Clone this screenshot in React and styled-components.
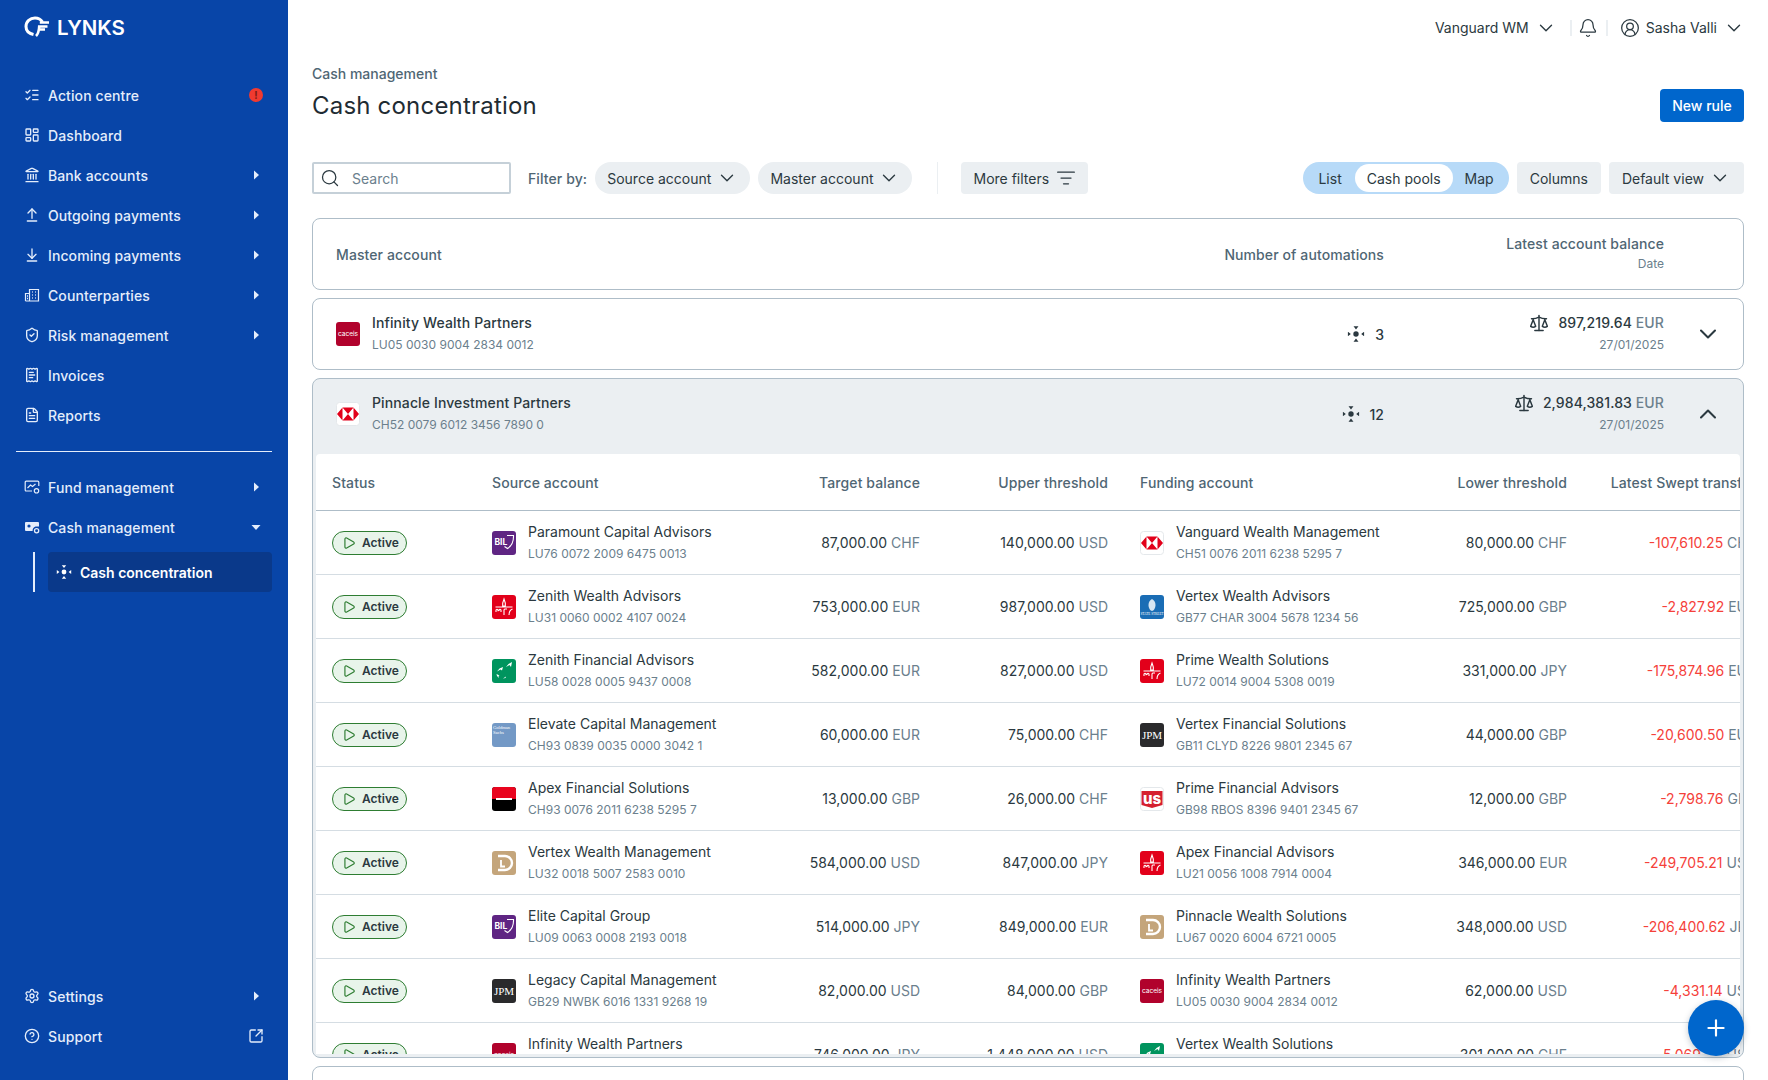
import React from "react";
import styled, { createGlobalStyle } from "styled-components";
import {
  ArrowDownToLine,
  ArrowUpFromLine,
  Bell,
  ChevronDown,
  ChevronUp,
  CircleHelp,
  CircleUserRound,
  FileText,
  LayoutDashboard,
  Landmark,
  ListChecks,
  ListFilter,
  Plus,
  ReceiptText,
  Scale,
  Search,
  Settings,
  ShieldCheck,
  SquareArrowOutUpRight,
  Play,
} from "lucide-react";

const GlobalStyle = createGlobalStyle`
  html, body { margin: 0; padding: 0; height: 100%; overflow: hidden; background: #fff; }
  body { font-family: Inter, "Liberation Sans", sans-serif; font-size: 14px; color: #2b3940; }
  * { box-sizing: border-box; }
`;

const Page = styled.div`
  display: flex;
  width: 100vw;
  height: 100vh;
  overflow: hidden;
`;

/* sidebar */
const Sidebar = styled.aside`
  width: 288px;
  flex: none;
  background: #0845a8;
  color: #e4edfb;
  display: flex;
  flex-direction: column;
  padding-bottom: 24px;
`;

const Brand = styled.div`
  height: 75px;
  padding: 16px 0 0 24px;
  display: flex;
  align-items: flex-start;
  gap: 7px;
  color: #fff;
`;

const BrandName = styled.span`
  font-size: 20.5px;
  line-height: 24px;
  font-weight: 600;
`;

const NavRow = styled.div`
  height: 40px;
  display: flex;
  align-items: center;
  padding: 0 24px;
  gap: 8px;
  font-weight: 500;
  letter-spacing: 0.1px;
  flex: none;
`;

const NavLabel = styled.span`
  flex: 1;
`;

const NavDivider = styled.div`
  height: 1px;
  background: #e4edfb;
  margin: 16px 16px 15px;
  flex: none;
`;

const SubNav = styled.div`
  margin: 5px 16px 0 33px;
  padding-left: 13px;
  border-left: 2px solid #e4edfb;
  flex: none;
`;

const SubItem = styled.div`
  height: 40px;
  display: flex;
  align-items: center;
  gap: 8px;
  padding-left: 8px;
  background: #0a398a;
  border-radius: 4px;
  color: #fff;
  font-weight: 600;
`;

const NavBottom = styled.div`
  margin-top: auto;
`;

const Alert = styled.span`
  width: 14px;
  height: 14px;
  margin-right: 1px;
  border-radius: 50%;
  background: #f03a30;
  color: #7d1a14;
  font-size: 10px;
  line-height: 14px;
  font-weight: 700;
  text-align: center;
`;

/* main column */
const Main = styled.main`
  flex: 1;
  min-width: 0;
  padding: 0 24px;
  height: 100vh;
  overflow: hidden;
`;

const TopBar = styled.div`
  height: 55px;
  display: flex;
  align-items: center;
  justify-content: flex-end;
  margin-right: -1px;
`;

const TopText = styled.span`
  color: #2b3940;
`;

const TopGroup = styled.div`
  display: flex;
  align-items: center;
  gap: ${(p) => p.$gap || 6}px;
`;

const TopDivider = styled.span`
  width: 2px;
  height: 16px;
  background: #ebeff2;
  margin: 0 ${(p) => p.$right}px 0 ${(p) => p.$left}px;
`;

const PageHead = styled.div`
  display: flex;
  justify-content: space-between;
  align-items: flex-end;
  padding-top: 9px;
  margin-bottom: 40px;
`;

const Crumb = styled.div`
  font-weight: 500;
  line-height: 20px;
  color: #4f6674;
  margin-bottom: 6px;
`;

const Title = styled.h1`
  margin: 0;
  font-size: 24px;
  line-height: 32px;
  font-weight: 400;
  letter-spacing: 0.2px;
  color: #1f2c33;
`;

const PrimaryButton = styled.button`
  height: 33px;
  width: 84px;
  border: 0;
  border-radius: 4px;
  background: #0066cc;
  color: #fff;
  font: 500 14px Inter, sans-serif;
`;

const Toolbar = styled.div`
  display: flex;
  align-items: center;
  height: 32px;
  margin-bottom: 24px;
`;

const SearchBox = styled.div`
  width: 199px;
  height: 32px;
  border: 2px solid #c5d0d8;
  border-radius: 2px;
  display: flex;
  align-items: center;
  gap: 12px;
  padding-left: 6px;
  color: #6b808d;
`;

const SearchGlyph = styled(Search)`
  color: #2b3940;
`;

const FilterLabel = styled.span`
  margin: 0 8px 0 17px;
  font-weight: 500;
  letter-spacing: 0.1px;
  color: #4f6674;
`;

const Chip = styled.div`
  height: 32px;
  display: flex;
  align-items: center;
  gap: ${(p) => p.$gap || 5}px;
  padding: 0 ${(p) => p.$pad || 12}px;
  margin-left: ${(p) => p.$left || 0}px;
  background: #ebeff2;
  border-radius: ${(p) => (p.$round ? "16px" : "4px")};
  color: #2b3940;
  white-space: nowrap;
`;

const ToolDivider = styled.span`
  width: 1px;
  height: 32px;
  background: #ebeff2;
  margin: 0 23px 0 25px;
`;

const RightTools = styled.div`
  margin-left: auto;
  display: flex;
  align-items: center;
  gap: 8px;
`;

const Segment = styled.div`
  height: 32px;
  display: flex;
  align-items: center;
  padding: 0 15px;
  border-radius: 16px;
  background: #b7daf8;
  color: #2b3940;
`;

const SegmentItem = styled.span`
  height: 28px;
  display: flex;
  align-items: center;
  border-radius: 14px;
  background: ${(p) => (p.$active ? "#fff" : "transparent")};
  padding: ${(p) => (p.$active ? "0 12px" : "0")};
  margin: ${(p) => (p.$active ? "0 12px 0 13px" : "0")};
`;

/* cards */
const Card = styled.section`
  border: 1px solid #aebdc8;
  border-radius: 8px;
  margin-bottom: 8px;
  overflow: hidden;
  background: ${(p) => (p.$open ? "#ebeff2" : "#fff")};
  ${(p) => p.$open && "height: 680px; padding: 0 3px 4px;"}
  ${(p) => p.$footer && "height: 72px;"}
`;

const MasterRow = styled.div`
  height: ${(p) => (p.$open ? 75 : 70)}px;
  display: flex;
  align-items: center;
  padding-left: ${(p) => (p.$open ? 20 : 23)}px;
  padding-bottom: ${(p) => (p.$open ? 5 : 0)}px;
`;

const MasterName = styled.div`
  flex: 1;
  min-width: 0;
  display: flex;
  align-items: center;
  gap: 12px;
`;

const HeadLabel = styled.div`
  font-weight: 500;
  letter-spacing: 0.1px;
  color: #4f6674;
`;

const AutoCell = styled.div`
  display: flex;
  align-items: center;
  justify-content: flex-end;
  gap: 10px;
  font-weight: 500;
`;

const BalanceCell = styled.div`
  width: 280px;
  text-align: right;
  flex: none;
`;

const BalanceTop = styled.div`
  display: flex;
  align-items: center;
  justify-content: flex-end;
  gap: 9px;
  line-height: 20px;
  font-weight: 500;
  letter-spacing: 0.1px;
`;

const DateText = styled.div`
  font-size: 12px;
  line-height: 20px;
  margin-top: 2px;
  color: #6b808d;
`;

const ToggleCell = styled.div`
  width: ${(p) => (p.$open ? 76 : 79)}px;
  flex: none;
  display: flex;
  justify-content: center;
  padding-left: ${(p) => (p.$open ? 12 : 8)}px;
  color: #2b3940;
`;

const AccountText = styled.div`
  min-width: 0;
`;

const AccountName = styled.div`
  line-height: 20px;
  white-space: nowrap;
  font-weight: ${(p) => (p.$strong ? 500 : 400)};
  letter-spacing: ${(p) => (p.$strong ? "0.12px" : "0")};
  color: #2b3940;
`;

const Iban = styled.div`
  font-size: 12px;
  line-height: 20px;
  margin-top: 2px;
  white-space: nowrap;
  color: #6b808d;
`;

const Currency = styled.span`
  color: #6b808d;
  font-weight: ${(p) => p.$weight || 400};
`;

/* inner table */
const TableWrap = styled.div`
  height: 600px;
  background: #fff;
  border-radius: 4px 4px 0 0;
  overflow: hidden;
`;

const columns = "160px 280px 180px 188px 280px 179px 189px";

const TableHead = styled.div`
  display: grid;
  grid-template-columns: ${columns};
  width: 1456px;
  height: 57px;
  align-items: center;
  border-bottom: 1px solid #aebdc8;
`;

const TableRow = styled.div`
  display: grid;
  grid-template-columns: ${columns};
  width: 1456px;
  height: 64px;
  align-items: center;
  border-bottom: 1px solid #d5dde3;
`;

const Th = styled.div`
  padding: 0 16px;
  font-weight: 500;
  letter-spacing: 0.1px;
  color: #4f6674;
  white-space: nowrap;
  text-align: ${(p) => (p.$right ? "right" : "left")};
`;

const Td = styled.div`
  padding: 0 16px;
  white-space: nowrap;
  text-align: right;
  color: ${(p) => (p.$negative ? "#f5413a" : "#2b3940")};
`;

const AccountCell = styled.div`
  padding: 0 16px;
  display: flex;
  align-items: center;
  gap: 12px;
`;

const StatusCell = styled.div`
  padding: 0 16px;
`;

const StatusPill = styled.span`
  width: 75px;
  height: 24px;
  display: flex;
  align-items: center;
  gap: 6px;
  padding-left: 9px;
  border: 1px solid #2e7d32;
  border-radius: 12px;
  background: #e8f4ea;
  font-size: 12px;
  font-weight: 600;
  color: #2b3940;
`;

const Fab = styled.button`
  position: fixed;
  left: 1688px;
  top: 1000px;
  width: 56px;
  height: 56px;
  border: 0;
  border-radius: 50%;
  background: #0066cc;
  color: #fff;
  display: flex;
  align-items: center;
  justify-content: center;
  box-shadow: 0 2px 6px rgba(20, 40, 60, 0.25);
`;

const Caret = ({ down }) => (
  <svg width="16" height="16" viewBox="0 0 16 16" fill="currentColor">
    {down ? <path d="M3.500 6h9L8 11z" /> : <path d="M6 3.500v9L11 8z" />}
  </svg>
);

const BrandMark = () => (
  <svg width="26" height="22" viewBox="0 0 26 22" fill="none" stroke="currentColor" strokeWidth="3">
    <path d="M9.500 18.500C5 17.500 2 14.600 2 10.500 2 5.600 6 2 11 2c3.600 0 6 1.600 7.500 4" />
    <path d="M12 20c2-2 3-5 3.200-9.500h8.300M15.800 6.500H25M15 13.500h6" strokeWidth="2.600" />
  </svg>
);

const FundIcon = () => (
  <svg width="16" height="16" viewBox="0 0 16 16" fill="none" stroke="currentColor" strokeWidth="1.200">
    <path d="M8 12H2.200a1 1 0 0 1-1-1V3.200a1 1 0 0 1 1-1h11.600a1 1 0 0 1 1 1V7" />
    <path d="M3.500 9l3-3 2 1.500L11.500 5" />
    <circle cx="12.500" cy="11.800" r="2.200" />
  </svg>
);

const CashIcon = () => (
  <svg width="16" height="16" viewBox="0 0 16 16" fill="currentColor">
    <path d="M1 4a1 1 0 0 1 1-1h12a1 1 0 0 1 1 1v3.500h-3.400a4.400 4.400 0 0 0-3 4.500H2a1 1 0 0 1-1-1z" />
    <circle cx="5" cy="7" r="1.600" fill="#0845a8" />
    <circle cx="12.600" cy="11.800" r="2.100" fill="none" stroke="currentColor" strokeWidth="1.300" />
  </svg>
);

const BuildingIcon = () => (
  <svg width="16" height="16" viewBox="0 0 16 16" fill="none" stroke="currentColor" strokeWidth="1.200">
    <path d="M1.500 14V6.500h4M5.500 14V2.500h9V14zM1.500 14h13" />
    <path d="M8 5h.8M11.200 5h.8M8 8h.8M11.200 8h.8M8 11h.8M11.200 11h.8M3 9h1M3 11.500h1" strokeWidth="1.400" />
  </svg>
);

const SweepIcon = ({ size = 18 }) => (
  <svg width={size} height={size} viewBox="0 0 16 16" fill="currentColor">
    <circle cx="8" cy="8" r="2.400" />
    <path d="M5.800 1.200h4.400L8 4zM5.800 14.800h4.400L8 12zM.8 6l2.600 2-2.600 2zM15.200 6l-2.600 2 2.600 2z" />
  </svg>
);

const Logo = ({ kind }) => {
  const box = { width: 24, height: 24, viewBox: "0 0 24 24", style: { flex: "none" } };
  switch (kind) {
    case "caceis":
      return (
        <svg {...box}>
          <rect width="24" height="24" rx="3" fill="#b1022c" />
          <text x="12" y="14" textAnchor="middle" fontSize="6.600" fill="#fff" fontFamily="Inter, sans-serif">caceis</text>
        </svg>
      );
    case "hsbc":
      return (
        <svg {...box}>
          <rect x=".5" y=".5" width="23" height="23" rx="3" fill="#fff" stroke="#e4e8eb" />
          <path d="M1 12l5.500-6.500v13zM23 12l-5.500-6.500v13zM6.500 5.500h11L12 12zM6.500 18.500h11L12 12z" fill="#e2001a" />
        </svg>
      );
    case "bil":
      return (
        <svg {...box}>
          <rect width="24" height="24" rx="3" fill="#5f2583" />
          <text x="2.500" y="14" fontSize="8.500" fontWeight="700" fill="#fff" fontFamily="Inter, sans-serif">BIL</text>
          <path d="M15 4.500l6.500 0c.3 7-2 10.500-6 13l-3-2" fill="none" stroke="#fff" strokeWidth="1.100" />
        </svg>
      );
    case "bridge":
      return (
        <svg {...box}>
          <rect width="24" height="24" rx="3" fill="#e2001a" />
          <path d="M12 4l1.300 4v3h-2.600V8zM3.500 12h17" fill="none" stroke="#fff" strokeWidth="1.100" />
          <path d="M4 17v-1.800c0-1.300 2-1.300 2 0v1M7 16v-.8c0-1.300 2-1.300 2 0V17M12 20v-4.800c0-1 1-1.200 1-1.200h2M17 20c0-3 .5-5 3.500-6" fill="none" stroke="#fff" strokeWidth="1.100" />
        </svg>
      );
    case "bnp":
      return (
        <svg {...box}>
          <rect width="24" height="24" rx="3" fill="#00945e" />
          <path d="M20 3l-1 5-1.500-2-3.500 2 2.500-3zM11 8l-1 3.500-1.500-1L5 12.500l2.500-3zM4.500 15l3 1.500-1 .5.500 2-2-2zM14 17.500l-3 2 2.500-.5z" fill="#fff" />
        </svg>
      );
    case "gs":
      return (
        <svg {...box}>
          <rect width="24" height="24" rx="3" fill="#7399c6" />
          <text x="1" y="6" fontSize="4.600" fill="#fff" fontFamily="Liberation Serif, serif">Goldman</text>
          <text x="1" y="10.500" fontSize="4.600" fill="#fff" fontFamily="Liberation Serif, serif">Sachs</text>
        </svg>
      );
    case "sg":
      return (
        <svg {...box}>
          <rect width="24" height="24" rx="3" fill="#000" />
          <path d="M0 3a3 3 0 0 1 3-3h18a3 3 0 0 1 3 3v9H0z" fill="#e9041e" />
          <rect x="4" y="11" width="16" height="2" fill="#fff" />
        </svg>
      );
    case "lombard":
      return (
        <svg {...box}>
          <rect width="24" height="24" rx="3" fill="#c4a57b" />
          <path d="M6 5h7a7 7 0 0 1 0 14H6" fill="none" stroke="#fff" strokeWidth="2.400" />
          <path d="M9 9v6.500h4" fill="none" stroke="#fff" strokeWidth="1.800" />
        </svg>
      );
    case "jpm":
      return (
        <svg {...box}>
          <rect width="24" height="24" rx="3" fill="#2a2a2c" />
          <text x="12" y="16" textAnchor="middle" fontSize="11" fill="#fff" fontFamily="Liberation Serif, serif">JPM</text>
        </svg>
      );
    case "us":
      return (
        <svg {...box}>
          <rect x=".5" y=".5" width="23" height="23" rx="3" fill="#fff" stroke="#e4e8eb" />
          <path d="M1.500 4h21v14l-10.500 3-10.500-3z" fill="#d5202f" />
          <text x="12" y="16.500" textAnchor="middle" fontSize="15" fontWeight="800" fill="#fff" fontFamily="Inter, sans-serif">us</text>
        </svg>
      );
    case "street":
      return (
        <svg {...box}>
          <rect width="24" height="24" rx="3" fill="#1a6db5" />
          <path d="M12 4c2 1 3.500 3 3.500 6S13.500 16 12 16s-3.500-3-3.500-6S10 5 12 4z" fill="#d7e6f3" />
          <text x="12" y="20" textAnchor="middle" fontSize="3.400" fill="#fff" fontFamily="Liberation Serif, serif">STATE STREET</text>
        </svg>
      );
    default:
      return null;
  }
};

const Account = ({ logo, name, iban }) => (
  <AccountCell>
    <Logo kind={logo} />
    <AccountText>
      <AccountName>{name}</AccountName>
      <Iban>{iban}</Iban>
    </AccountText>
  </AccountCell>
);

const Money = ({ value, negative }) => {
  const [amount, currency] = value.split(" ");
  return (
    <Td $negative={negative}>
      {amount} <Currency>{currency}</Currency>
    </Td>
  );
};

const navMain = [
  { label: "Action centre", icon: <ListChecks size={16} />, alert: true },
  { label: "Dashboard", icon: <LayoutDashboard size={16} /> },
  { label: "Bank accounts", icon: <Landmark size={16} />, caret: true },
  { label: "Outgoing payments", icon: <ArrowUpFromLine size={16} />, caret: true },
  { label: "Incoming payments", icon: <ArrowDownToLine size={16} />, caret: true },
  { label: "Counterparties", icon: <BuildingIcon />, caret: true },
  { label: "Risk management", icon: <ShieldCheck size={16} />, caret: true },
  { label: "Invoices", icon: <ReceiptText size={16} /> },
  { label: "Reports", icon: <FileText size={16} /> },
];

const rows = [
  ["bil", "Paramount Capital Advisors", "LU76 0072 2009 6475 0013", "87,000.00 CHF", "140,000.00 USD", "hsbc", "Vanguard Wealth Management", "CH51 0076 2011 6238 5295 7", "80,000.00 CHF", "-107,610.25 CHF"],
  ["bridge", "Zenith Wealth Advisors", "LU31 0060 0002 4107 0024", "753,000.00 EUR", "987,000.00 USD", "street", "Vertex Wealth Advisors", "GB77 CHAR 3004 5678 1234 56", "725,000.00 GBP", "-2,827.92 EUR"],
  ["bnp", "Zenith Financial Advisors", "LU58 0028 0005 9437 0008", "582,000.00 EUR", "827,000.00 USD", "bridge", "Prime Wealth Solutions", "LU72 0014 9004 5308 0019", "331,000.00 JPY", "-175,874.96 EUR"],
  ["gs", "Elevate Capital Management", "CH93 0839 0035 0000 3042 1", "60,000.00 EUR", "75,000.00 CHF", "jpm", "Vertex Financial Solutions", "GB11 CLYD 8226 9801 2345 67", "44,000.00 GBP", "-20,600.50 EUR"],
  ["sg", "Apex Financial Solutions", "CH93 0076 2011 6238 5295 7", "13,000.00 GBP", "26,000.00 CHF", "us", "Prime Financial Advisors", "GB98 RBOS 8396 9401 2345 67", "12,000.00 GBP", "-2,798.76 GBP"],
  ["lombard", "Vertex Wealth Management", "LU32 0018 5007 2583 0010", "584,000.00 USD", "847,000.00 JPY", "bridge", "Apex Financial Advisors", "LU21 0056 1008 7914 0004", "346,000.00 EUR", "-249,705.21 USD"],
  ["bil", "Elite Capital Group", "LU09 0063 0008 2193 0018", "514,000.00 JPY", "849,000.00 EUR", "lombard", "Pinnacle Wealth Solutions", "LU67 0020 6004 6721 0005", "348,000.00 USD", "-206,400.62 JPY"],
  ["jpm", "Legacy Capital Management", "GB29 NWBK 6016 1331 9268 19", "82,000.00 USD", "84,000.00 GBP", "caceis", "Infinity Wealth Partners", "LU05 0030 9004 2834 0012", "62,000.00 USD", "-4,331.14 USD"],
  ["caceis", "Infinity Wealth Partners", "LU05 0030 9004 2834 0012", "746,000.00 JPY", "1,448,000.00 USD", "bnp", "Vertex Wealth Solutions", "LU58 0028 0005 9437 0008", "301,000.00 CHF", "-5,069.40 USD"],
];

const App = () => (
  <Page>
    <GlobalStyle />
    <Sidebar>
      <Brand>
        <BrandMark />
        <BrandName>LYNKS</BrandName>
      </Brand>
      {navMain.map((item) => (
        <NavRow key={item.label}>
          {item.icon}
          <NavLabel>{item.label}</NavLabel>
          {item.alert && <Alert>!</Alert>}
          {item.caret && <Caret />}
        </NavRow>
      ))}
      <NavDivider />
      <NavRow>
        <FundIcon />
        <NavLabel>Fund management</NavLabel>
        <Caret />
      </NavRow>
      <NavRow>
        <CashIcon />
        <NavLabel>Cash management</NavLabel>
        <Caret down />
      </NavRow>
      <SubNav>
        <SubItem>
          <SweepIcon size={16} />
          <span>Cash concentration</span>
        </SubItem>
      </SubNav>
      <NavBottom>
        <NavRow>
          <Settings size={16} />
          <NavLabel>Settings</NavLabel>
          <Caret />
        </NavRow>
        <NavRow>
          <CircleHelp size={16} />
          <NavLabel>Support</NavLabel>
          <SquareArrowOutUpRight size={16} />
        </NavRow>
      </NavBottom>
    </Sidebar>

    <Main>
      <TopBar>
        <TopGroup>
          <TopText>Vanguard WM</TopText>
          <ChevronDown size={22} strokeWidth={1.5} />
        </TopGroup>
        <TopDivider $left={13} $right={6} />
        <Bell size={20} strokeWidth={1.5} />
        <TopDivider $left={8} $right={12} />
        <TopGroup>
          <CircleUserRound size={20} strokeWidth={1.5} />
          <TopText>Sasha Valli</TopText>
          <ChevronDown size={22} strokeWidth={1.5} />
        </TopGroup>
      </TopBar>

      <PageHead>
        <div>
          <Crumb>Cash management</Crumb>
          <Title>Cash concentration</Title>
        </div>
        <PrimaryButton>New rule</PrimaryButton>
      </PageHead>

      <Toolbar>
        <SearchBox>
          <SearchGlyph size={20} strokeWidth={1.5} />
          <span>Search</span>
        </SearchBox>
        <FilterLabel>Filter by:</FilterLabel>
        <Chip $round>
          Source account <ChevronDown size={22} strokeWidth={1.5} />
        </Chip>
        <Chip $round $left={8}>
          Master account <ChevronDown size={22} strokeWidth={1.5} />
        </Chip>
        <ToolDivider />
        <Chip $gap={7}>
          More filters <ListFilter size={20} strokeWidth={1.5} />
        </Chip>
        <RightTools>
          <Segment>
            <SegmentItem>List</SegmentItem>
            <SegmentItem $active>Cash pools</SegmentItem>
            <SegmentItem>Map</SegmentItem>
          </Segment>
          <Chip $pad={13}>Columns</Chip>
          <Chip $pad={13}>
            Default view <ChevronDown size={22} strokeWidth={1.5} />
          </Chip>
        </RightTools>
      </Toolbar>

      <Card>
        <MasterRow>
          <MasterName>
            <HeadLabel>Master account</HeadLabel>
          </MasterName>
          <HeadLabel>Number of automations</HeadLabel>
          <BalanceCell>
            <HeadLabel>Latest account balance</HeadLabel>
            <DateText>Date</DateText>
          </BalanceCell>
          <ToggleCell />
        </MasterRow>
      </Card>

      <Card>
        <MasterRow>
          <MasterName>
            <Logo kind="caceis" />
            <AccountText>
              <AccountName $strong>Infinity Wealth Partners</AccountName>
              <Iban>LU05 0030 9004 2834 0012</Iban>
            </AccountText>
          </MasterName>
          <AutoCell>
            <SweepIcon />3
          </AutoCell>
          <BalanceCell>
            <BalanceTop>
              <Scale size={20} strokeWidth={1.75} />
              <span>
                897,219.64 <Currency $weight={500}>EUR</Currency>
              </span>
            </BalanceTop>
            <DateText>27/01/2025</DateText>
          </BalanceCell>
          <ToggleCell>
            <ChevronDown size={28} strokeWidth={1.75} />
          </ToggleCell>
        </MasterRow>
      </Card>

      <Card $open>
        <MasterRow $open>
          <MasterName>
            <Logo kind="hsbc" />
            <AccountText>
              <AccountName $strong>Pinnacle Investment Partners</AccountName>
              <Iban>CH52 0079 6012 3456 7890 0</Iban>
            </AccountText>
          </MasterName>
          <AutoCell>
            <SweepIcon />12
          </AutoCell>
          <BalanceCell>
            <BalanceTop>
              <Scale size={20} strokeWidth={1.75} />
              <span>
                2,984,381.83 <Currency $weight={500}>EUR</Currency>
              </span>
            </BalanceTop>
            <DateText>27/01/2025</DateText>
          </BalanceCell>
          <ToggleCell $open>
            <ChevronUp size={28} strokeWidth={1.75} />
          </ToggleCell>
        </MasterRow>
        <TableWrap>
          <TableHead>
            <Th>Status</Th>
            <Th>Source account</Th>
            <Th $right>Target balance</Th>
            <Th $right>Upper threshold</Th>
            <Th>Funding account</Th>
            <Th $right>Lower threshold</Th>
            <Th $right>Latest Swept transfer</Th>
          </TableHead>
          {rows.map((row) => (
            <TableRow key={row[2] + row[1]}>
              <StatusCell>
                <StatusPill>
                  <Play size={14} color="#2e7d32" strokeWidth={2} />
                  Active
                </StatusPill>
              </StatusCell>
              <Account logo={row[0]} name={row[1]} iban={row[2]} />
              <Money value={row[3]} />
              <Money value={row[4]} />
              <Account logo={row[5]} name={row[6]} iban={row[7]} />
              <Money value={row[8]} />
              <Money value={row[9]} negative />
            </TableRow>
          ))}
        </TableWrap>
      </Card>

      <Card $footer />
    </Main>

    <Fab>
      <Plus size={26} />
    </Fab>
  </Page>
);

export default App;
